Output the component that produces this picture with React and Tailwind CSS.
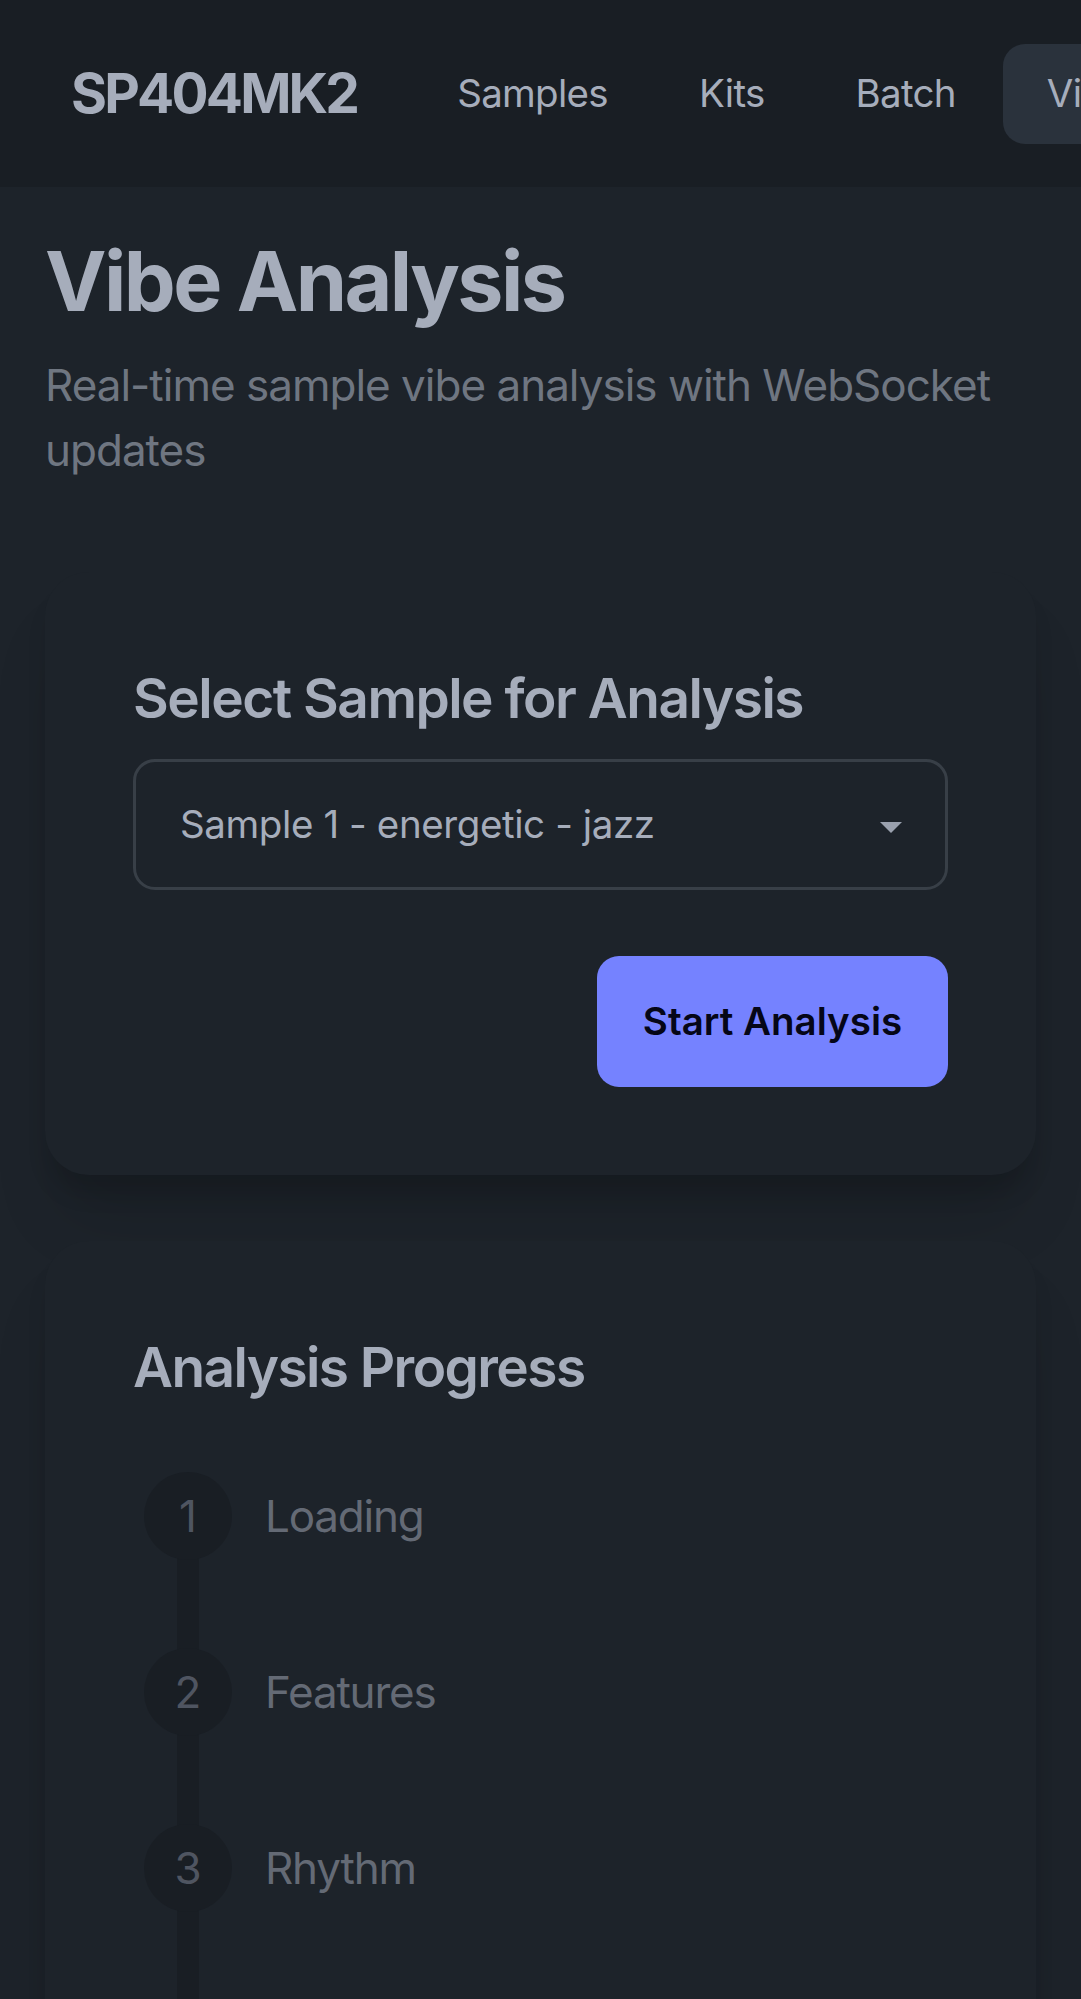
import React, { useState } from 'react';

const navItems = ['Samples', 'Kits', 'Batch', 'Vibe Analysis', 'Settings'];

const samples = [
    'Sample 1 - energetic - jazz',
    'Sample 2 - chill - lofi',
    'Sample 3 - dark - trap',
];

const steps = ['Loading', 'Features', 'Rhythm', 'Mood', 'Complete'];

// card look: same bg as page, only an offset drop shadow shows its edge
const cardClass = "rounded-[44px] bg-[#1d232a] p-[88px] shadow-[0_22px_22px_-4px_rgba(0,0,0,0.14),0_55px_69px_-14px_rgba(0,0,0,0.12)]";

const App = () => {
    const [active] = useState('Vibe Analysis');
    const [sample, setSample] = useState(samples[0]);

    return (
        <div className="min-h-screen bg-[#1d232a] text-[#a6adbb] font-['Inter','Liberation_Sans',sans-serif] overflow-hidden">
            {/* Navbar */}
            <header className="h-[187px] bg-[#191e24] flex items-center overflow-hidden whitespace-nowrap">
                <a className="shrink-0 pl-[71px] pr-[56px] text-[55px] font-bold tracking-[-2.8px]">SP404MK2</a>
                <nav className="flex shrink-0 gap-[3px]">
                    {navItems.map((item) => (
                        <a
                            key={item}
                            className={`h-[100px] px-[44px] flex items-center rounded-[22px] text-[38.5px] tracking-[-0.7px] ${active === item ? 'bg-[#2a323c]' : ''}`}
                        >
                            {item}
                        </a>
                    ))}
                </nav>
            </header>

            <main className="px-[45px] pt-[45px] pb-[90px]">
                <h1 className="text-[82.5px] leading-[99px] font-bold tracking-[-2.6px]">Vibe Analysis</h1>
                <p className="mt-[22px] text-[44px] leading-[65px] tracking-[-1px] text-[#6f7681]">
                    Real-time sample vibe analysis with WebSocket updates
                </p>

                {/* Sample picker */}
                <section className={`mt-[89px] ${cardClass}`}>
                    <h2 className="text-[55px] leading-[77px] font-semibold tracking-[-1.5px]">Select Sample for Analysis</h2>
                    <div className="relative mt-[22px]">
                        <select
                            value={sample}
                            onChange={(e) => setSample(e.target.value)}
                            className="appearance-none w-full h-[131px] rounded-[22px] border-[3px] border-[#383f47] bg-transparent pl-[44px] pr-[110px] text-[38.5px] tracking-[-0.4px] text-[#a6adbb] outline-none"
                        >
                            {samples.map((s) => (
                                <option key={s} value={s}>{s}</option>
                            ))}
                        </select>
                        <svg className="absolute right-[46px] top-[63px] w-[22px] h-[11px] pointer-events-none" viewBox="0 0 22 11">
                            <path d="M0 0 L22 0 L11 11 Z" fill="#9aa1ae" />
                        </svg>
                    </div>
                    <div className="flex justify-end mt-[66px]">
                        <button className="w-[351px] h-[131px] rounded-[22px] bg-[#7582ff] text-[#050617] text-[38.5px] font-semibold">
                            Start Analysis
                        </button>
                    </div>
                </section>

                {/* Progress */}
                <section className={`mt-[66px] ${cardClass}`}>
                    <h2 className="text-[55px] leading-[77px] font-semibold tracking-[-1.6px]">Analysis Progress</h2>
                    <ul className="mt-[22px]">
                        {steps.map((step, i) => (
                            <li key={step} className="relative h-[176px] flex items-center">
                                {i > 0 && (
                                    <span className="absolute left-[44px] top-[-88px] w-[22px] h-[176px] bg-[#191e24]" />
                                )}
                                <span className="relative z-10 ml-[11px] w-[88px] h-[88px] rounded-full bg-[#191e24] flex items-center justify-center text-[44px] text-[#4f5561]">
                                    {i + 1}
                                </span>
                                <span className="ml-[33px] text-[44px] tracking-[-1.2px] text-[#646a75]">{step}</span>
                            </li>
                        ))}
                    </ul>
                </section>
            </main>
        </div>
    );
};

export default App;
